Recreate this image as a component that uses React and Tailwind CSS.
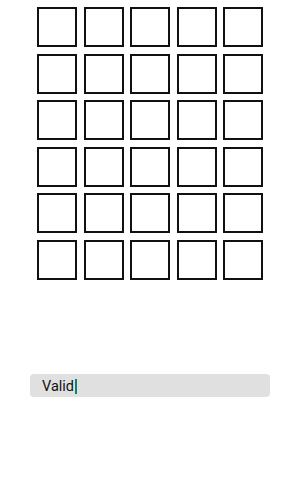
import React from 'react';

const ROWS = 6;
const COLS = 5;

export default function App() {
  return (
    <div className="w-[300px] h-[482px] bg-white flex flex-col items-center" style={{ fontFamily: 'Roboto, "Noto Sans", sans-serif' }}>
      {/* letter grid */}
      <div className="mt-[7px] grid grid-cols-5 gap-[6.5px]">
        {Array.from({ length: ROWS * COLS }).map((_, i) => (
          <div key={i} className="w-10 h-10 border-2 border-[#111] bg-white" />
        ))}
      </div>

      {/* guess field */}
      <div className="mt-[94px] w-[240px] h-[23px] rounded-[4px] bg-[#e0e0e0] flex items-center pl-[12px] pt-[3px] text-[14.5px] text-[#111]">
        <span className="leading-[16px]">Valid</span>
        <span className="w-[2px] h-[15px] bg-[#00897b] ml-[1px]" />
      </div>
    </div>
  );
}
